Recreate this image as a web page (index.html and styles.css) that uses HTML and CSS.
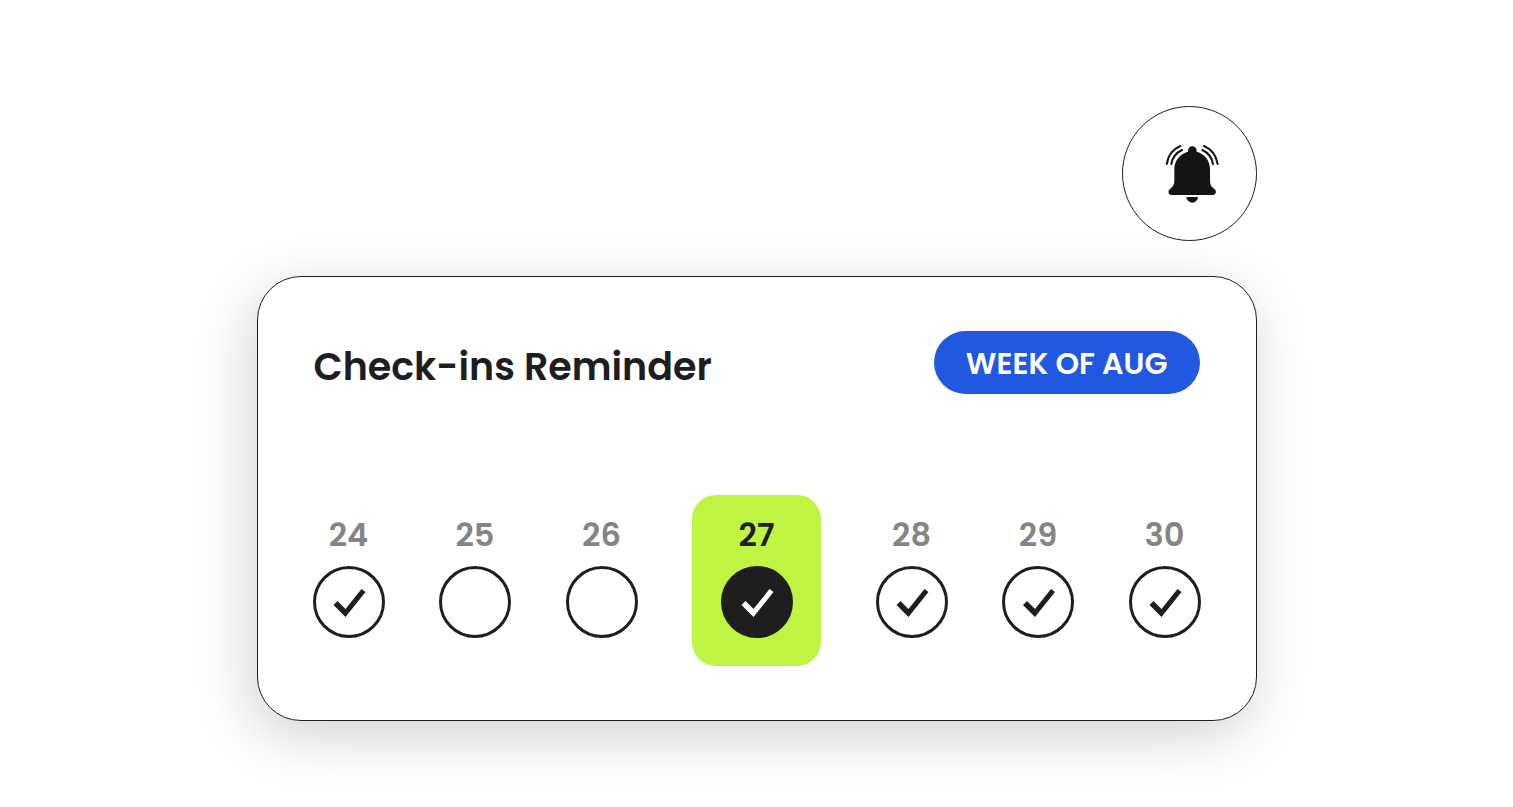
FILE: index.html
```html
<!DOCTYPE html>
<html lang="en">
<head>
  <meta charset="UTF-8">
  <meta name="viewport" content="width=device-width,initial-scale=1.0">
  <title>Check-ins Reminder</title>
  <link rel="stylesheet" href="styles.css">
</head>
<body>
  <main class="reminder">
    <button class="bell" type="button" aria-label="Notifications">
      <svg viewBox="-99 -84 399 399" aria-hidden="true">
        <path class="bell-body" d="M96 50V47a13 13 0 0 1 26 0v3C146 56 162 77 162 102V138C162 150 167 156 174 161A10 10 0 0 1 171 180H46A10 10 0 0 1 43 161C50 156 55 150 55 138V102C55 77 72 56 96 50Z"/>
        <path class="bell-body" d="M91 186H126C125 196 118 203 109 203S92 196 91 186Z"/>
        <path class="bell-wave" d="M32 87C36 62 52 42 73 33M46 87C49 68 61 53 78 45"/>
        <path class="bell-wave" d="M185 87C181 62 165 42 144 33M171 87C168 68 156 53 139 45"/>
      </svg>
    </button>

    <section class="card">
      <header class="card-header">
        <h1>Check-ins Reminder</h1>
        <span class="week">WEEK OF AUG</span>
      </header>

      <div class="days">
        <div class="day">
          <label for="day-24">24</label>
          <input type="checkbox" id="day-24" checked>
        </div>
        <div class="day">
          <label for="day-25">25</label>
          <input type="checkbox" id="day-25">
        </div>
        <div class="day">
          <label for="day-26">26</label>
          <input type="checkbox" id="day-26">
        </div>
        <div class="day today">
          <label for="day-27">27</label>
          <input type="checkbox" id="day-27" checked>
        </div>
        <div class="day">
          <label for="day-28">28</label>
          <input type="checkbox" id="day-28" checked>
        </div>
        <div class="day">
          <label for="day-29">29</label>
          <input type="checkbox" id="day-29" checked>
        </div>
        <div class="day">
          <label for="day-30">30</label>
          <input type="checkbox" id="day-30" checked>
        </div>
      </div>
    </section>
  </main>
</body>
</html>
```

FILE: styles.css
```css
* { box-sizing:border-box; }
body { min-height:100vh; margin:0; background:#fff; color:#1e1e1e; font-family:Poppins,Inter,sans-serif; }

.reminder { display:flex; flex-direction:column; gap:35px; max-width:1000px; margin:0 auto; padding:106px 0 86px; }

.bell { align-self:flex-end; width:135px; height:135px; padding:0; border:1px solid #1e1e1e;
        border-radius:50%; background:transparent; cursor:pointer; }
.bell svg { display:block; width:100%; }
.bell-body { fill:#141414; }
.bell-wave { fill:none; stroke:#141414; stroke-width:6; stroke-linecap:round; }

.card { padding:54px 55px; border:1px solid #1e1e1e; border-radius:44px; background:#fff;
        box-shadow:-6px 15px 60px rgba(0,0,0,0.18); }
.card-header { display:flex; justify-content:space-between; align-items:flex-end; margin-bottom:101px; padding:0 1px; }
.card-header h1 { margin:0; font-size:38px; line-height:54px; font-weight:600; }
.week { padding:2px 32px 0; border-radius:32px; background:#2058df; color:#fff;
        font-size:30px; line-height:61px; font-weight:600; white-space:nowrap; }

.days { display:flex; justify-content:space-between; }
.day { display:flex; flex-direction:column; align-items:center; gap:10px; padding:19px 0 28px; }
.day label { color:#858585; font-size:32px; line-height:42px; font-weight:600; }
.day input { appearance:none; width:72px; height:72px; margin:0; border:3px solid #1e1e1e;
             border-radius:50%; cursor:pointer; }
.day input:checked::before { content:""; display:block; height:100%; background:#1e1e1e;
                             clip-path:polygon(18px 36px, 22px 32px, 30px 40px, 46px 20px, 50px 23px, 30px 48px); }
.today { width:129px; border-radius:24px; background:#bff542; }
.today label { color:#1e1e1e; }
.today input { background:#1e1e1e; }
.today input:checked::before { background:#fff; }

@media(max-width:900px) {
  .card-header { flex-direction:column; align-items:flex-start; gap:24px; margin-bottom:40px; }
  .days { flex-wrap:wrap; justify-content:flex-start; gap:16px; }
}
```
